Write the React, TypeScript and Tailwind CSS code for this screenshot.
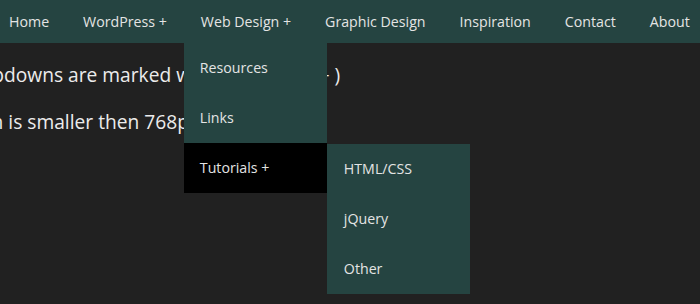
const navItems = [
  "Home",
  "WordPress +",
  "Web Design +",
  "Graphic Design",
  "Inspiration",
  "Contact",
  "About",
];

const dropItems = ["Resources", "Links", "Tutorials +"];
const subItems = ["HTML/CSS", "jQuery", "Other"];

export default function App() {
  return (
    <div
      className="h-[304px] w-[700px] overflow-hidden bg-[#212121] text-[#e4e4e4]"
      style={{ fontFamily: '"Open Sans", sans-serif' }}
    >
      <nav className="relative h-[43px] bg-[#254441]">
        <ul className="-ml-[8px] flex h-full items-center whitespace-nowrap text-[14.2px]">
          {navItems.map((item) => (
            <li key={item} className="relative flex h-full items-center px-[17px]">
              {item}
              {item === "Web Design +" && (
                <ul className="absolute left-0 top-[43px] z-10 w-[143px]">
                  {dropItems.map((d) => (
                    <li
                      key={d}
                      className={`relative flex h-[50px] items-center px-[16px] ${
                        d === "Tutorials +" ? "bg-black" : "bg-[#254441]"
                      }`}
                    >
                      {d}
                      {d === "Tutorials +" && (
                        <ul className="absolute left-[143px] top-[1px] w-[143px] bg-[#254441]">
                          {subItems.map((s) => (
                            <li key={s} className="flex h-[50px] items-center px-[17px]">
                              {s}
                            </li>
                          ))}
                        </ul>
                      )}
                    </li>
                  ))}
                </ul>
              )}
            </li>
          ))}
        </ul>
      </nav>
      <div className="whitespace-nowrap pt-[18px] text-[19.2px] text-[#ececec]">
        <p className="-ml-[41px]">
          Dropdowns are marked w
          <span className="tracking-[-0.6px]">ith a plus sign ( </span>+ )
        </p>
        <p className="-ml-[163px] mt-[18px]">
          Change the screen is smaller then 768px.
        </p>
      </div>
    </div>
  );
}
